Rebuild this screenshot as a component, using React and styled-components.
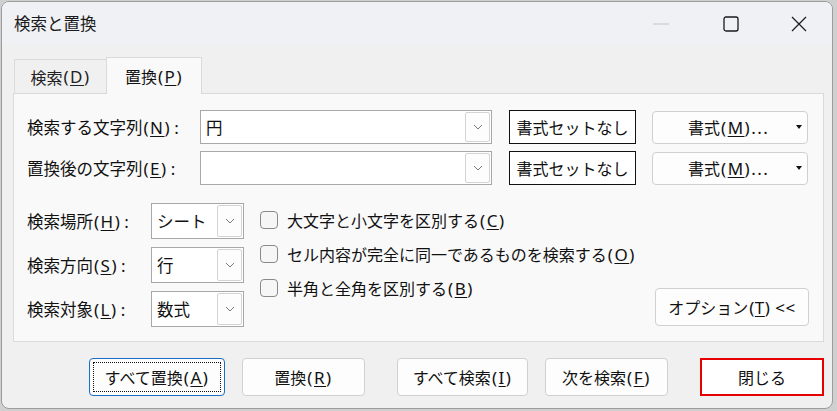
import React from "react";
import styled, { createGlobalStyle, css } from "styled-components";

const GlobalStyle = createGlobalStyle`
  html, body { margin: 0; padding: 0; background: #d0d0d0; }
  body {
    font-family: "Noto Sans CJK JP", "Noto Sans", "Liberation Sans", sans-serif;
    color: #111;
  }
  #root { width: 837px; height: 411px; }
  * { box-sizing: border-box; }
  u { text-underline-offset: 2px; text-decoration-thickness: 1px; }
`;

const Window = styled.div`
  margin: 1px 0 0 1px;
  width: 832px;
  height: 408px;
  border: 1px solid #9c9c9c;
  border-radius: 8px;
  background: #f0f0f0;
  overflow: hidden;
  display: flex;
  flex-direction: column;
`;

const TitleBar = styled.div`
  height: 43px;
  flex: none;
  background: #f0f1f5;
  display: flex;
  align-items: center;
  padding-left: 12px;
`;

const Title = styled.div`
  font-size: 16.5px;
  color: #1a1a1a;
  flex: 1;
  padding-bottom: 1px;
`;

const Controls = styled.div`
  display: flex;
  height: 100%;
`;

const CtrlBtn = styled.div`
  width: ${(p) => p.$w}px;
  height: 100%;
  display: flex;
  align-items: center;
  justify-content: center;
`;

const Body = styled.div`
  flex: 1;
  display: flex;
  flex-direction: column;
  padding: 12px 8px 0 11px;
`;

const TabStrip = styled.div`
  display: flex;
  align-items: flex-end;
  height: 36px;
  padding-left: 1px;
`;

const Tab = styled.div`
  font-size: 16px;
  display: flex;
  align-items: center;
  justify-content: center;
  border: 1px solid #dadada;
  border-bottom: none;
  ${(p) =>
    p.$active
      ? css`
          width: 96px;
          height: 37px;
          margin-bottom: -1px;
          background: #f9f9f9;
          position: relative;
          z-index: 1;
          color: #111;
        `
      : css`
          width: 92px;
          height: 34px;
          background: #f0f0f0;
          border-right: none;
          color: #222;
        `}
`;

/* Latin part of a caption (mnemonic, colon, ellipsis) — wider, as in the UI font */
const Mn = styled.span`
  font-family: "Noto Sans", "Liberation Sans", sans-serif;
  font-size: 17px;
  letter-spacing: ${(p) => (p.$tight ? 0.5 : 1.5)}px;
  margin-left: 1px;
`;

const Colon = styled.span`
  margin-left: 3px;
`;

const Panel = styled.div`
  height: 249px;
  border: 1px solid #dadada;
  background: #f9f9f9;
  padding: 16px 14px 0 13px;
  display: flex;
  flex-direction: column;
`;

const FieldRow = styled.div`
  display: flex;
  align-items: center;
  height: 34px;
  & + & { margin-top: 7px; }
`;

const Label = styled.div`
  font-size: 16.5px;
  width: ${(p) => p.$w}px;
  flex: none;
  white-space: nowrap;
  color: #111;
`;

const Combo = styled.div`
  width: ${(p) => p.$w}px;
  height: ${(p) => p.$h || 34}px;
  flex: none;
  border: 1px solid #a8a8a8;
  background: #fff;
  display: flex;
  align-items: stretch;
  padding: 1px 1px 1px 5px;
`;

const ComboText = styled.div`
  flex: 1;
  font-size: 16.5px;
  display: flex;
  align-items: center;
  color: #111;
`;

const DropBtn = styled.div`
  width: 25px;
  flex: none;
  border: 1px solid #d4d4d4;
  border-radius: 2px;
  background: #fdfdfd;
  display: flex;
  align-items: center;
  justify-content: center;
`;

const BaseButton = styled.div`
  flex: none;
  font-size: 16px;
  display: flex;
  align-items: center;
  justify-content: center;
  background: #fff;
  color: #111;
  white-space: nowrap;
  position: relative;
`;

const PlainButton = styled(BaseButton)`
  width: ${(p) => p.$w}px;
  height: ${(p) => p.$h || 38}px;
  margin-left: ${(p) => p.$ml || 0}px;
  border: 1px solid #d0d0d0;
  border-radius: 4px;
  background: #fdfdfd;
`;

const FocusButton = styled(PlainButton)`
  border: 1px solid #1a6fc4;
  &::after {
    content: "";
    position: absolute;
    inset: 3px;
    border: 1px dotted #111;
  }
`;

const BoxButton = styled(BaseButton)`
  width: ${(p) => p.$w}px;
  height: ${(p) => p.$h}px;
  margin-left: ${(p) => p.$ml || 0}px;
  border: ${(p) => p.$bw}px solid ${(p) => p.$color};
`;

const FormatButton = styled(PlainButton)`
  justify-content: flex-start;
  padding-left: 35px;
`;

const Caret = styled.span`
  position: absolute;
  right: 5px;
  top: 50%;
  margin-top: -2px;
  width: 0;
  height: 0;
  border-left: 3.5px solid transparent;
  border-right: 3.5px solid transparent;
  border-top: 4px solid #111;
`;

const Lower = styled.div`
  display: flex;
  margin-top: 18px;
  flex: 1;
  padding-bottom: 16px;
`;

const ScopeGrid = styled.div`
  display: grid;
  grid-template-columns: 124px 93px;
  grid-auto-rows: 36px;
  row-gap: 8px;
  align-items: center;
`;

const Checks = styled.div`
  display: flex;
  flex-direction: column;
  margin-left: 16px;
`;

const CheckRow = styled.div`
  display: flex;
  align-items: center;
  height: 34px;
  gap: 9px;
  font-size: 16px;
  white-space: nowrap;
`;

const CheckBox = styled.div`
  width: 18px;
  height: 18px;
  border: 1px solid #8a8a8a;
  border-radius: 4px;
  background: #f6f6f6;
  flex: none;
`;

const OptionButton = styled(PlainButton)`
  margin-left: auto;
  align-self: flex-end;
  margin-bottom: 1px;
`;

const ButtonBar = styled.div`
  display: flex;
  justify-content: flex-end;
  margin-top: 16px;
`;

const Chevron = () => (
  <svg width="10" height="6" viewBox="0 0 10 6">
    <polyline points="1,1 5,5 9,1" fill="none" stroke="#7a7a7a" strokeWidth="1" />
  </svg>
);

const ComboField = ({ w, h, text }) => (
  <Combo $w={w} $h={h}>
    <ComboText>{text}</ComboText>
    <DropBtn>
      <Chevron />
    </DropBtn>
  </Combo>
);

const Key = ({ k, tail = "", colon = false }) => (
  <Mn>
    (<u>{k}</u>){tail}
    {colon && <Colon>:</Colon>}
  </Mn>
);

export default function App() {
  return (
    <>
      <GlobalStyle />
      <Window>
        <TitleBar>
          <Title>検索と置換</Title>
          <Controls>
            <CtrlBtn $w={70}>
              <svg width="16" height="2" viewBox="0 0 16 2">
                <line x1="0" y1="1" x2="16" y2="1" stroke="#c4c4c4" strokeWidth="1" />
              </svg>
            </CtrlBtn>
            <CtrlBtn $w={70}>
              <svg width="16" height="16" viewBox="0 0 16 16">
                <rect x="1" y="1" width="14" height="14" rx="2" fill="none" stroke="#1a1a1a" strokeWidth="1.3" />
              </svg>
            </CtrlBtn>
            <CtrlBtn $w={66}>
              <svg width="16" height="16" viewBox="0 0 16 16">
                <path d="M1 1 L15 15 M15 1 L1 15" stroke="#1a1a1a" strokeWidth="1.2" />
              </svg>
            </CtrlBtn>
          </Controls>
        </TitleBar>
        <Body>
          <TabStrip>
            <Tab>
              検索<Key k="D" />
            </Tab>
            <Tab $active>
              置換<Key k="P" />
            </Tab>
          </TabStrip>
          <Panel>
            <FieldRow>
              <Label $w={173}>
                検索する文字列<Key k="N" colon />
              </Label>
              <ComboField w={292} text="円" />
              <BoxButton $w={127} $h={34} $ml={17} $bw={1.5} $color="#111">
                書式セットなし
              </BoxButton>
              <FormatButton $w={156} $h={33} $ml={16}>
                書式<Key k="M" tail="..." />
                <Caret />
              </FormatButton>
            </FieldRow>
            <FieldRow>
              <Label $w={173}>
                置換後の文字列<Key k="E" colon />
              </Label>
              <ComboField w={292} text="" />
              <BoxButton $w={127} $h={34} $ml={17} $bw={1.5} $color="#111">
                書式セットなし
              </BoxButton>
              <FormatButton $w={156} $h={33} $ml={16}>
                書式<Key k="M" tail="..." />
                <Caret />
              </FormatButton>
            </FieldRow>
            <Lower>
              <ScopeGrid>
                <Label $w={124}>
                  検索場所<Key k="H" colon />
                </Label>
                <ComboField w={93} h={36} text="シート" />
                <Label $w={124}>
                  検索方向<Key k="S" colon />
                </Label>
                <ComboField w={93} h={36} text="行" />
                <Label $w={124}>
                  検索対象<Key k="L" colon />
                </Label>
                <ComboField w={93} h={36} text="数式" />
              </ScopeGrid>
              <Checks>
                <CheckRow>
                  <CheckBox />
                  <span>
                    大文字と小文字を区別する<Key k="C" />
                  </span>
                </CheckRow>
                <CheckRow>
                  <CheckBox />
                  <span>
                    セル内容が完全に同一であるものを検索する<Key k="O" />
                  </span>
                </CheckRow>
                <CheckRow>
                  <CheckBox />
                  <span>
                    半角と全角を区別する<Key k="B" />
                  </span>
                </CheckRow>
              </Checks>
              <OptionButton $w={154} $h={38}>
                オプション
                <Mn $tight>
                  (<u>T</u>) &lt;&lt;
                </Mn>
              </OptionButton>
            </Lower>
          </Panel>
          <ButtonBar>
            <FocusButton $w={136}>
              すべて置換<Key k="A" />
            </FocusButton>
            <PlainButton $w={123} $ml={17}>
              置換<Key k="R" />
            </PlainButton>
            <PlainButton $w={131} $ml={32}>
              すべて検索<Key k="I" />
            </PlainButton>
            <PlainButton $w={123} $ml={17}>
              次を検索<Key k="F" />
            </PlainButton>
            <BoxButton $w={124} $h={38} $ml={32} $bw={2} $color="#e60000">
              閉じる
            </BoxButton>
          </ButtonBar>
        </Body>
      </Window>
    </>
  );
}
